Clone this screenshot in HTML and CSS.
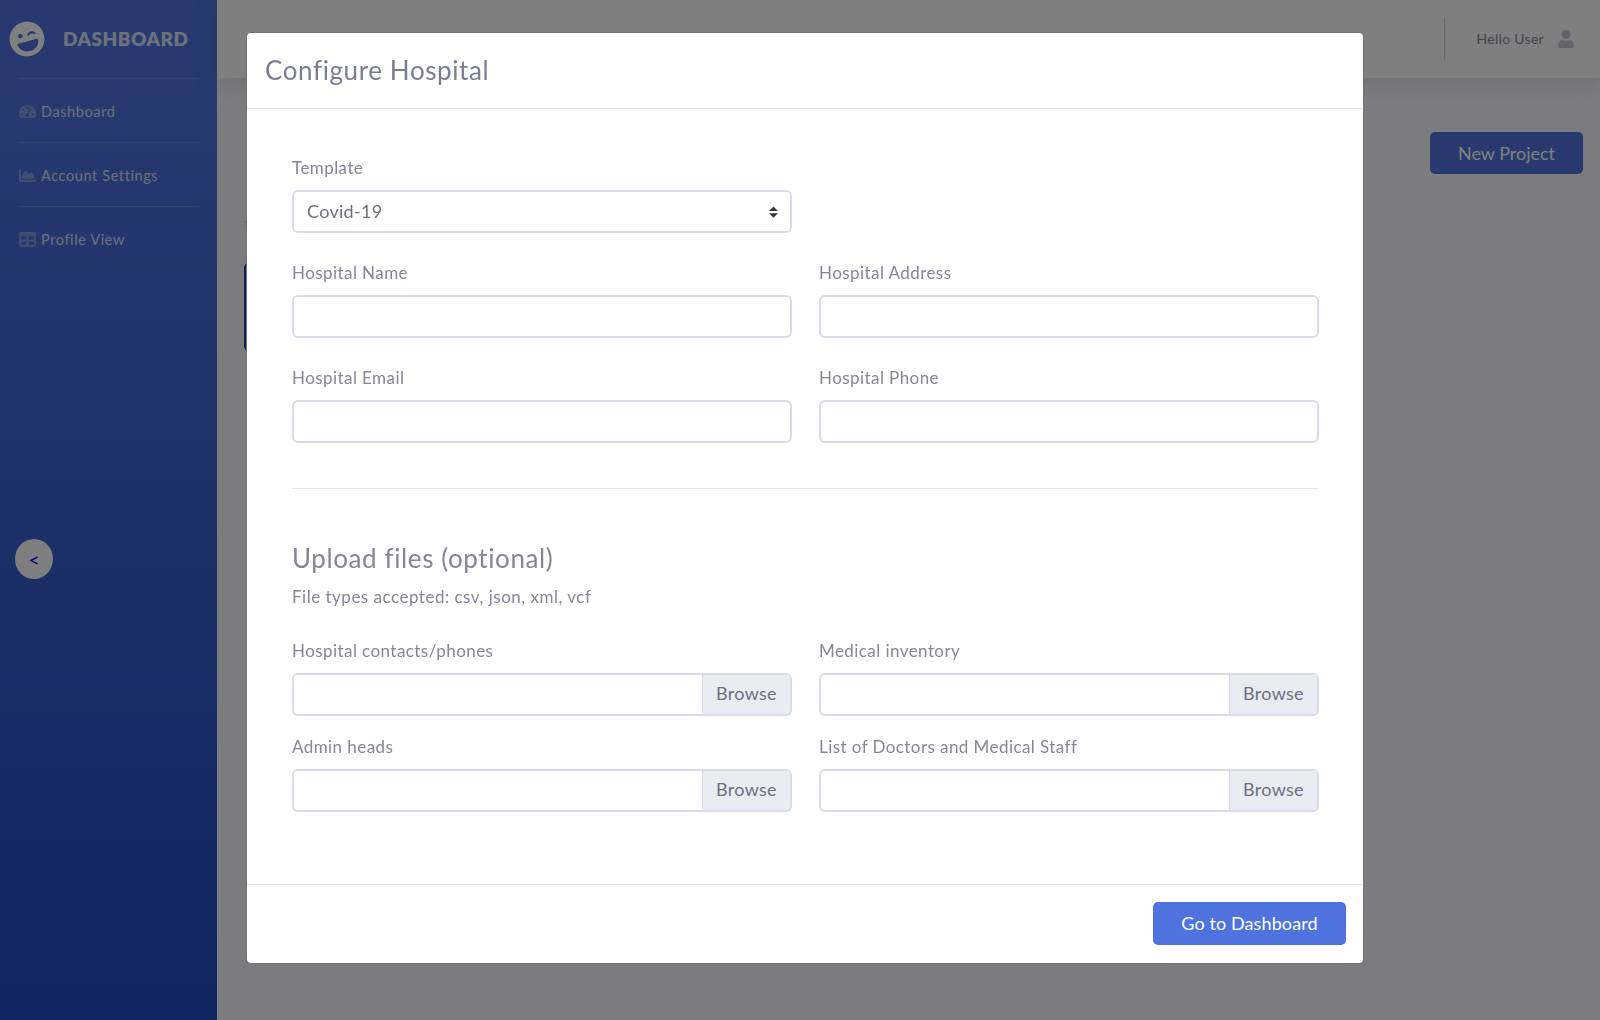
FILE: index.html
```html
<!DOCTYPE html>
<html lang="en">
<head>
<meta charset="utf-8">
<title>Configure Hospital</title>
<link rel="stylesheet" href="styles.css">
</head>
<body>
<div class="app">
  <aside class="sidebar">
    <div class="brand">
      <svg class="brand-icon" viewBox="0 0 496 512"><path d="M248 8C111 8 0 119 0 256s111 248 248 248 248-111 248-248S385 8 248 8zm20.1 198.1c4-25.2 34.2-42.1 59.9-42.1s55.9 16.9 59.9 42.1c1.7 11.1-11.4 18.3-19.8 10.8l-9.5-8.5c-14.8-13.2-46.2-13.2-61 0L288 217c-8.4 7.4-21.6.3-19.9-10.9zM168 160c17.7 0 32 14.3 32 32s-14.3 32-32 32-32-14.3-32-32 14.3-32 32-32zm230.9 146C390 377 329.4 432 256 432h-16c-73.4 0-134-55-142.9-126-1.2-9.5 6.3-18 15.9-18h270c9.6 0 17.1 8.4 15.9 18z"/></svg>
      <span class="brand-text">DASHBOARD</span>
    </div>
    <nav class="nav">
      <a class="nav-item">
        <svg class="nav-icon" viewBox="0 0 576 512"><path d="M288 32C128.94 32 0 160.94 0 320c0 52.8 14.25 102.26 39.06 144.8 5.61 9.62 16.3 15.2 27.44 15.2h443c11.14 0 21.83-5.58 27.44-15.2C561.75 422.26 576 372.8 576 320c0-159.06-128.94-288-288-288zm0 64c14.71 0 26.58 10.13 30.32 23.65-1.11 2.26-2.64 4.23-3.45 6.67l-9.22 27.67c-5.13 3.49-10.97 6.01-17.64 6.01-17.67 0-32-14.33-32-32S270.33 96 288 96zM96 384c-17.67 0-32-14.33-32-32s14.33-32 32-32 32 14.33 32 32-14.33 32-32 32zm48-160c-17.67 0-32-14.33-32-32s14.33-32 32-32 32 14.33 32 32-14.33 32-32 32zm246.77-72.41l-61.33 184C343.13 347.33 352 364.54 352 384c0 11.72-3.38 22.55-8.88 32H232.88c-5.5-9.45-8.88-20.28-8.88-32 0-33.94 26.5-61.43 59.9-63.59l61.34-184.01c4.17-12.56 17.73-19.45 30.36-15.17 12.57 4.19 19.35 17.79 15.17 30.36zm14.66 57.2l15.52-46.55c3.47-1.29 7.13-2.23 11.05-2.23 17.67 0 32 14.33 32 32s-14.33 32-32 32c-11.38-.01-20.89-6.28-26.57-15.22zM480 384c-17.67 0-32-14.33-32-32s14.33-32 32-32 32 14.33 32 32-14.33 32-32 32z"/></svg>
        <span>Dashboard</span>
      </a>
      <a class="nav-item">
        <svg class="nav-icon" viewBox="0 0 512 512"><path d="M500 384c6.6 0 12 5.4 12 12v40c0 6.6-5.4 12-12 12H12c-6.6 0-12-5.4-12-12V76c0-6.6 5.4-12 12-12h40c6.6 0 12 5.4 12 12v308h436zM372.7 159.5L288 216l-85.3-113.7c-5.1-6.8-15.5-6.3-19.9 1L96 248v104h384l-89.9-187.8c-3.2-6.5-11.4-8.7-17.4-4.7z"/></svg>
        <span>Account Settings</span>
      </a>
      <a class="nav-item">
        <svg class="nav-icon" viewBox="0 0 512 512"><path d="M464 32H48C21.49 32 0 53.49 0 80v352c0 26.51 21.49 48 48 48h416c26.51 0 48-21.49 48-48V80c0-26.51-21.49-48-48-48zM224 416H64v-96h160v96zm0-160H64v-96h160v96zm224 160H288v-96h160v96zm0-160H288v-96h160v96z"/></svg>
        <span>Profile View</span>
      </a>
    </nav>
    <button class="collapse-btn" type="button">&lt;</button>
  </aside>
  <div class="main">
    <header class="topbar">
      <div class="topbar-divider"></div>
      <span class="hello">Hello User</span>
      <svg class="user-icon" viewBox="0 0 448 512"><path d="M224 256c70.7 0 128-57.3 128-128S294.7 0 224 0 96 57.3 96 128s57.3 128 128 128zm89.6 32h-16.7c-22.2 10.2-46.9 16-72.9 16s-50.6-5.8-72.9-16h-16.7C60.2 288 0 348.2 0 422.4V464c0 26.5 21.5 48 48 48h352c26.5 0 48-21.5 48-48v-41.6c0-74.2-60.2-134.4-134.4-134.4z"/></svg>
    </header>
    <section class="content">
      <div class="content-head">
        <h1 class="page-title">List</h1>
        <button class="new-project" type="button">New Project</button>
      </div>
      <p class="page-sub">s</p>
      <div class="project-card"></div>
    </section>
  </div>
</div>

<div class="backdrop">
  <div class="modal">
    <div class="modal-header">
      <h2 class="modal-title">Configure Hospital</h2>
    </div>
    <form class="modal-body">
      <div class="grid">
        <div class="field">
          <label class="label">Template</label>
          <select class="control select"><option>Covid-19</option></select>
        </div>
        <div></div>
        <div class="field">
          <label class="label">Hospital Name</label>
          <input class="control" type="text">
        </div>
        <div class="field">
          <label class="label">Hospital Address</label>
          <input class="control" type="text">
        </div>
        <div class="field">
          <label class="label">Hospital Email</label>
          <input class="control" type="text">
        </div>
        <div class="field">
          <label class="label">Hospital Phone</label>
          <input class="control" type="text">
        </div>
      </div>
      <hr class="rule">
      <h3 class="section-title">Upload files (optional)</h3>
      <p class="section-note">File types accepted: csv, json, xml, vcf</p>
      <div class="grid grid-files">
        <div class="field">
          <label class="label">Hospital contacts/phones</label>
          <div class="file"><span class="file-name"></span><span class="file-btn">Browse</span></div>
        </div>
        <div class="field">
          <label class="label">Medical inventory</label>
          <div class="file"><span class="file-name"></span><span class="file-btn">Browse</span></div>
        </div>
        <div class="field">
          <label class="label">Admin heads</label>
          <div class="file"><span class="file-name"></span><span class="file-btn">Browse</span></div>
        </div>
        <div class="field">
          <label class="label">List of Doctors and Medical Staff</label>
          <div class="file"><span class="file-name"></span><span class="file-btn">Browse</span></div>
        </div>
      </div>
    </form>
    <div class="modal-footer">
      <button class="primary" type="button">Go to Dashboard</button>
    </div>
  </div>
</div>
</body>
</html>
```
FILE: styles.css
```css
* { box-sizing: border-box; }
html, body { margin: 0; height: 100%; }
body {
  height: 1020px;
  overflow: hidden;
  font-family: "Lato", "Open Sans", "Liberation Sans", sans-serif;
  font-size: 16px;
  color: #858796;
  background: #f8f9fc;
}
.app { display: flex; height: 1020px; }

/* Sidebar */
.sidebar {
  width: 217px;
  flex: none;
  padding: 0 18px;
  background: linear-gradient(180deg, #4e73df 10%, #224abe 100%);
  display: flex;
  flex-direction: column;
}
.brand {
  height: 78px;
  margin: 0 -9px;
  padding-bottom: 1px;
  display: flex;
  align-items: center;
}
.brand-icon { width: 36px; height: 36px; fill: #fff; transform: rotate(-15deg); flex: none; }
.brand-text { margin-left: 18px; font-weight: 800; font-size: 19px; color: #fff; opacity: .8; letter-spacing: .5px; }
.nav { display: flex; flex-direction: column; }
.nav-item {
  height: 64px;
  padding-top: 2px;
  border-top: 1px solid rgba(255,255,255,.15);
  display: flex;
  align-items: center;
  gap: 5px;
  color: rgba(255,255,255,.8);
  font-size: 14.5px;
  letter-spacing: .6px;
}
.nav-icon { width: 17px; height: 17px; fill: rgba(255,255,255,.3); flex: none; margin-left: 1px; }
.collapse-btn {
  margin: 269px 0 0 -3px;
  width: 38px;
  height: 40px;
  border: 0;
  padding: 0;
  border-radius: 50%;
  background: #fff;
  color: #0000ff;
  font: 20px "Lato", sans-serif;
}

/* Main */
.main { flex: 1; min-width: 0; display: flex; flex-direction: column; }
.topbar {
  height: 78px;
  background: #fff;
  display: flex;
  align-items: center;
  justify-content: flex-end;
  padding-right: 25px;
  padding-bottom: 1px;
  box-shadow: 0 4px 24px rgba(58,59,69,.15);
}
.topbar-divider { width: 1px; height: 42px; background: #d1d3e2; margin-right: 31px; }
.hello { font-size: 14px; color: #858796; letter-spacing: .3px; }
.user-icon { width: 18px; height: 18px; fill: #c4c6d8; margin-left: 13px; }
.content { flex: 1; padding: 54px 17px 0 28px; }
.content-head { display: flex; align-items: center; justify-content: space-between; height: 42px; }
.page-title { margin: 0; font-size: 28px; font-weight: 400; color: #2a2a2a; }
.new-project {
  width: 153px;
  height: 42px;
  border: 0;
  border-radius: 5px;
  background: #4e73df;
  color: #fff;
  font: 18px "Lato", sans-serif;
}
.page-sub { margin: 38px 0 0; font-size: 14px; line-height: 20px; color: #333; }
.project-card { margin: 30px 0 0 -1px; height: 90px; width: 300px; border-radius: 6px; background: #1c3aa9; }

/* Modal */
.backdrop {
  position: fixed;
  inset: 0;
  background: rgba(0,0,0,.5);
  padding: 32px 0 0 246px;
}
.modal {
  width: 1118px;
  height: 932px;
  background: #fff;
  border: 1px solid rgba(0,0,0,.55);
  border-radius: 5px;
  display: flex;
  flex-direction: column;
}
.modal-header {
  height: 76px;
  flex: none;
  padding: 0 18px 2px;
  display: flex;
  align-items: center;
  border-bottom: 1px solid #e3e6f0;
}
.modal-title { margin: 0; font-size: 26px; font-weight: 400; color: #7b7e92; letter-spacing: .6px; }
.modal-body { flex: 1; padding: 47px 44px 0 45px; }
.modal-footer {
  height: 79px;
  flex: none;
  padding: 0 17px 2px;
  display: flex;
  align-items: center;
  justify-content: flex-end;
  border-top: 1px solid #e3e6f0;
}
.grid { display: grid; grid-template-columns: 500px 500px; column-gap: 27px; row-gap: 28px; }
.grid-files { row-gap: 19px; margin-top: 30px; }
.field { display: flex; flex-direction: column; }
.label { line-height: 24px; margin-bottom: 10px; font-size: 17px; letter-spacing: .43px; color: #858796; }
.control {
  height: 43px;
  width: 100%;
  padding: 0 13px 2px;
  border: 2px solid #d9dbe9;
  border-radius: 6px;
  background: #fff;
  font: 18px "Lato", sans-serif;
  letter-spacing: .3px;
  color: #6e707e;
}
.select {
  appearance: none;
  background: #fff url("data:image/svg+xml,%3csvg xmlns='http://www.w3.org/2000/svg' width='4' height='5' viewBox='0 0 4 5'%3e%3cpath fill='%23343a40' d='M2 0L0 2h4zm0 5L0 3h4z'/%3e%3c/svg%3e") no-repeat right 12px center / 9px 12px;
}
.rule { margin: 45px 0 0; border: 0; border-top: 1px solid #e3e6f0; }
.section-title { margin: 52px 0 0; font-size: 26px; line-height: 34px; font-weight: 400; letter-spacing: .6px; color: #858796; }
.section-note { margin: 10px 0 0; font-size: 17px; line-height: 24px; letter-spacing: .5px; color: #858796; }
.file {
  height: 43px;
  display: flex;
  border: 2px solid #d9dbe9;
  border-radius: 6px;
  overflow: hidden;
}
.file-name { flex: 1; background: #fff; }
.file-btn {
  flex: none;
  width: 88px;
  padding-bottom: 3px;
  display: flex;
  align-items: center;
  justify-content: center;
  background: #eaecf4;
  border-left: 1px solid #d9dbe9;
  font-size: 18px;
  letter-spacing: .3px;
  color: #6e707e;
}
.primary {
  width: 193px;
  height: 43px;
  border: 0;
  border-radius: 5px;
  background: #4e73df;
  color: #fff;
  font: 18px "Lato", sans-serif;
  letter-spacing: .1px;
}
```
